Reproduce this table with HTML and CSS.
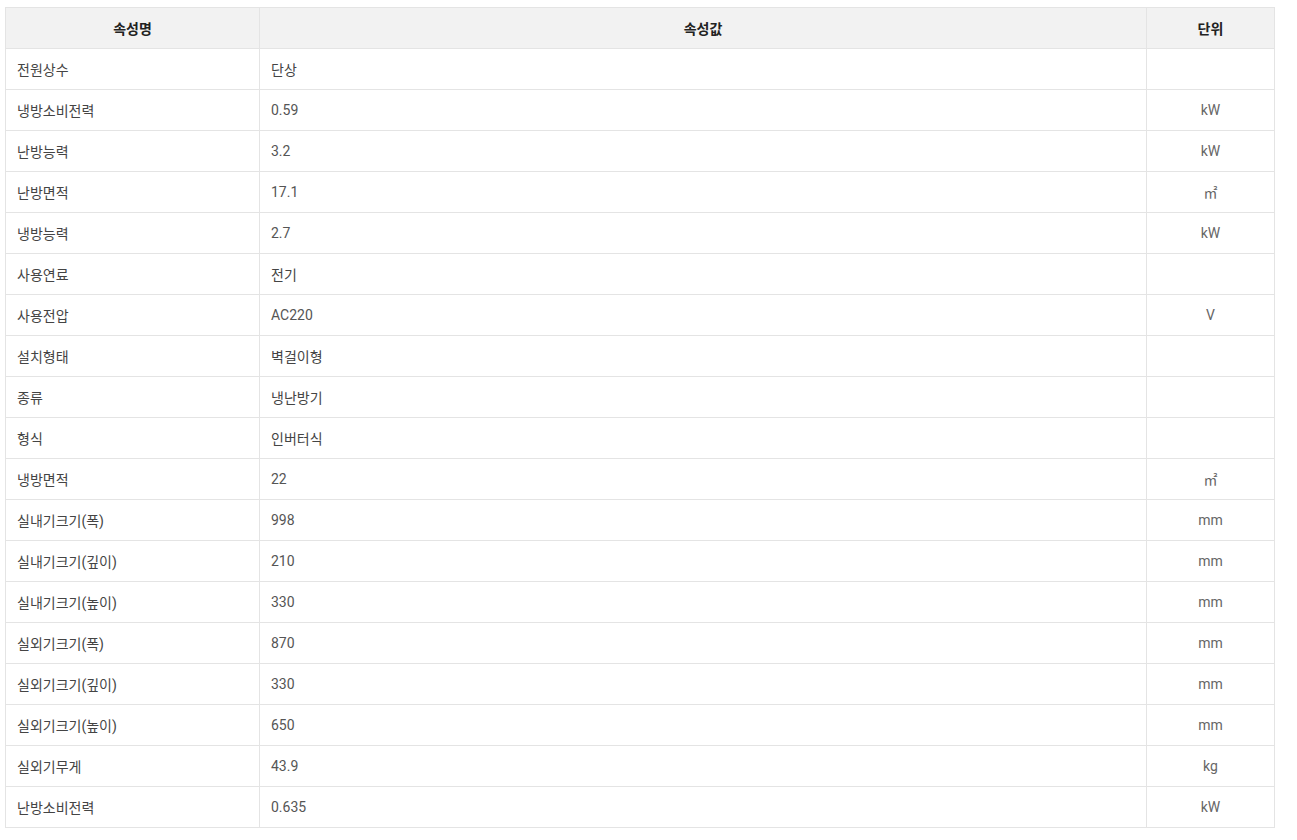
FILE: index.html
```html
<!DOCTYPE html>
<html lang="ko">
<head>
<meta charset="utf-8">
<link rel="stylesheet" href="styles.css">
</head>
<body>
<table class="spec">
<colgroup><col class="c1"><col class="c2"><col class="c3"></colgroup>
<thead><tr><th>속성명</th><th>속성값</th><th>단위</th></tr></thead>
<tbody>
<tr><td class="ko">전원상수</td><td class="ko">단상</td><td class="u"></td></tr>
<tr><td class="ko">냉방소비전력</td><td>0.59</td><td class="u">kW</td></tr>
<tr><td class="ko">난방능력</td><td>3.2</td><td class="u">kW</td></tr>
<tr><td class="ko">난방면적</td><td>17.1</td><td class="u">㎡</td></tr>
<tr><td class="ko">냉방능력</td><td>2.7</td><td class="u">kW</td></tr>
<tr><td class="ko">사용연료</td><td class="ko">전기</td><td class="u"></td></tr>
<tr><td class="ko">사용전압</td><td>AC220</td><td class="u">V</td></tr>
<tr><td class="ko">설치형태</td><td class="ko">벽걸이형</td><td class="u"></td></tr>
<tr><td class="ko">종류</td><td class="ko">냉난방기</td><td class="u"></td></tr>
<tr><td class="ko">형식</td><td class="ko">인버터식</td><td class="u"></td></tr>
<tr><td class="ko">냉방면적</td><td>22</td><td class="u">㎡</td></tr>
<tr><td class="ko">실내기크기(폭)</td><td>998</td><td class="u">mm</td></tr>
<tr><td class="ko">실내기크기(깊이)</td><td>210</td><td class="u">mm</td></tr>
<tr><td class="ko">실내기크기(높이)</td><td>330</td><td class="u">mm</td></tr>
<tr><td class="ko">실외기크기(폭)</td><td>870</td><td class="u">mm</td></tr>
<tr><td class="ko">실외기크기(깊이)</td><td>330</td><td class="u">mm</td></tr>
<tr><td class="ko">실외기크기(높이)</td><td>650</td><td class="u">mm</td></tr>
<tr><td class="ko">실외기무게</td><td>43.9</td><td class="u">kg</td></tr>
<tr><td class="ko">난방소비전력</td><td>0.635</td><td class="u">kW</td></tr>
</tbody>
</table>
</body>
</html>
```
FILE: styles.css
```css
html, body { margin: 0; padding: 0; background: #fff; }
body { padding: 7px 5px; font-family: Roboto, "Noto Sans CJK KR", sans-serif; }
.spec {
  width: 1269px;
  border-collapse: collapse;
  table-layout: fixed;
  font-size: 14px;
  color: #555;
}
.c1 { width: 254px; }
.c2 { width: 887px; }
.c3 { width: 128px; }
.spec th, .spec td {
  border: 1px solid #e4e4e4;
  height: 41px;
  padding: 0 11px;
  box-sizing: border-box;
  vertical-align: middle;
  white-space: nowrap;
}
.spec th {
  background: #f2f2f2;
  color: #222;
  font-weight: bold;
  text-align: center;
}
.spec td { text-align: left; }
.spec td.ko { color: #444; }
.spec td.u { text-align: center; color: #666; }
```
